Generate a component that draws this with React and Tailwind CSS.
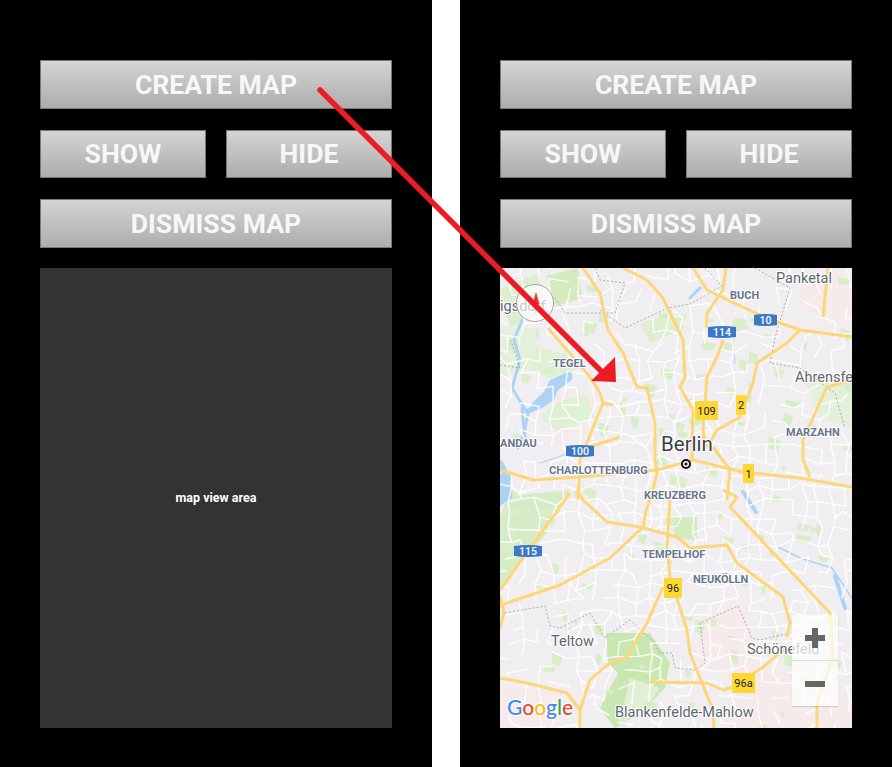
import React from 'react';

const font = { fontFamily: 'Roboto, sans-serif' };

// Yellow main roads, in map coordinates (352x460)
const mainRoads = [
  '83,0 100,25 108,62 123,85 137,119 147,120 155,155 155,192 157,205 153,222',
  '48,60 90,109 100,125 103,135 113,137',
  '103,135 80,192 78,232',
  '123,0 147,12 163,30 183,72 185,109 180,119 193,142 192,169 192,192',
  '193,0 207,22 253,44 280,55 300,62 352,69',
  '226,0 223,22 207,45 206,60',
  '223,72 217,89 207,109 203,159 205,180',
  '300,62 287,75 257,95 253,115 240,149 217,162 207,179',
  '0,202 33,212 80,209 157,202 193,192 243,204 300,210 352,219',
  '80,182 120,169',
  '352,112 327,119 303,172 303,192 310,209',
  '213,179 230,202 227,232',
  '328,0 323,49',
  '77,222 83,232 107,254 140,259 177,269 190,280 227,277 237,295 283,329 290,355 287,369',
  '170,232 167,279 170,309 187,362 190,385 213,442 214,460',
  '143,259 110,290 60,317 7,335 0,339',
  '0,322 70,225',
  '163,319 147,355 127,389 107,397 90,412 80,442 80,460',
  '0,410 27,415 67,425 80,442',
  '150,414 207,415 223,422 233,419 263,399 287,379',
  '223,222 237,229 230,239 330,345 333,389 317,435 317,460',
  '143,259 146,243 153,222',
  '0,328 4,345 0,360',
];

// Seeded random so the street mesh comes out the same every time
const makeRandom = (seed) => () => {
  seed = (seed * 1664525 + 1013904223) % 4294967296;
  return seed / 4294967296;
};

const buildStreets = () => {
  const rand = makeRandom(7);
  const step = 14;
  const cols = 27;
  const rows = 35;
  const nodes = [];
  for (let r = 0; r < rows; r++) {
    const row = [];
    for (let c = 0; c < cols; c++) {
      row.push([c * step + (rand() - 0.5) * 10 - 4, r * step + (rand() - 0.5) * 10 - 4]);
    }
    nodes.push(row);
  }
  const out = [];
  for (let r = 0; r < rows; r++) {
    for (let c = 0; c < cols; c++) {
      const [x, y] = nodes[r][c];
      const dist = Math.hypot(x - 175, y - 240);
      const chance = dist < 110 ? 0.85 : dist < 180 ? 0.62 : 0.42;
      if (c + 1 < cols && rand() < chance) out.push(`M${x.toFixed(1)},${y.toFixed(1)}L${nodes[r][c + 1][0].toFixed(1)},${nodes[r][c + 1][1].toFixed(1)}`);
      if (r + 1 < rows && rand() < chance) out.push(`M${x.toFixed(1)},${y.toFixed(1)}L${nodes[r + 1][c][0].toFixed(1)},${nodes[r + 1][c][1].toFixed(1)}`);
    }
  }
  return out.join('');
};

const buildSpecks = () => {
  const rand = makeRandom(21);
  const out = [];
  for (let i = 0; i < 130; i++) {
    const x = rand() * 345;
    const y = rand() * 455;
    const w = 4 + rand() * 11;
    const h = 3 + rand() * 8;
    out.push(`M${x.toFixed(1)},${y.toFixed(1)}l${w.toFixed(1)},${(h * 0.4).toFixed(1)}l${(-w * 0.3).toFixed(1)},${h.toFixed(1)}l${(-w * 0.7).toFixed(1)},${(-h * 0.3).toFixed(1)}z`);
  }
  return out.join('');
};

const streetMesh = buildStreets();
const parkSpecks = buildSpecks();

const greens = [
  ['M46,8 L78,0 L82,30 L55,38 Z', '#d3ebbf'], ['M0,20 L40,5 L45,40 L10,60 Z', '#deefd0'],
  ['M7,228 L70,222 L50,262 L10,305 L0,320 L0,250 Z', '#d6ecc6'], ['M173,249 L197,249 L197,272 L175,270 Z', '#d3ebbf'],
  ['M105,365 L150,365 L170,395 L165,420 L140,445 L115,460 L100,440 L118,405 L108,395 Z', '#c9e7b1'],
  ['M130,410 L160,420 L140,450 L122,445 Z', '#e0f0d5'], ['M30,75 L60,85 L80,100 L50,110 L25,100 Z', '#e0f0d4'],
  ['M55,135 L85,125 L95,150 L60,165 L40,150 Z', '#e0f0d4'], ['M140,55 L175,45 L185,60 L150,75 Z', '#deefd0'],
  ['M0,60 L40,60 L30,100 L0,110 Z', '#e4f1da'], ['M300,100 L352,120 L352,160 L320,150 Z', '#e4f1da'],
];

const pinks = [
  'M55,125 L100,125 L85,165 L50,175 Z', 'M195,350 L240,335 L262,395 L250,425 L200,395 Z',
  'M262,395 L352,430 L352,460 L220,460 L240,420 Z', 'M0,420 L60,425 L65,460 L0,460 Z', 'M300,10 L352,5 L352,60 L300,40 Z',
];

const waters = [
  ['M22,52 L14,72 L20,92 L12,120 L28,146 L24,165 L18,180', 3], ['M68,108 L50,118 L44,135 L28,143', 5],
  ['M22,140 L25,170', 3], ['M0,195 L8,210 L4,228', 6], ['M243,224 L256,244', 4],
  ['M276,278 L300,290 L332,300 L352,330', 1.5], ['M335,308 L345,340', 4], ['M0,235 L10,228', 5],
  ['M193,130 L180,140', 1], ['M235,95 L232,60', 1], ['M190,30 L200,20', 3], ['M85,180 L40,195', 1],
];

const districts = [
  ['BUCH', 230, 31], ['TEGEL', 53, 99], ['MARZAHN', 286, 168], ['CHARLOTTENBURG', 49, 206],
  ['KREUZBERG', 144, 231], ['TEMPELHOF', 142, 290], ['NEUKÖLLN', 193, 315], ['ANDAU', 0, 179],
];

const towns = [
  ['Panketal', 276, 15, 14.5], ['Ahrensfe', 295, 114, 14.5], ['Teltow', 51, 378, 14.5],
  ['Schönefeld', 247, 386, 14.5], ['Blankenfelde-Mahlow', 115, 449, 14.5], ['igsdorf', 0, 43, 14.5],
];

const blueShields = [['114', 208, 58, 28], ['10', 254, 46, 23], ['100', 66, 177, 28], ['115', 14, 277, 28]];

const yellowShields = [
  ['109', 195, 133, 23, 19], ['2', 236, 127, 10, 20], ['1', 243, 196, 11, 19],
  ['96', 164, 310, 18, 20], ['96a', 232, 405, 23, 20],
];

const CityMap = () => (
  <svg viewBox="0 0 352 460" className="block w-full h-full" style={font}>
    <rect width="352" height="460" fill="#f1eef1" />
    {pinks.map((d) => <path key={d} d={d} fill="#f6ebea" />)}
    {greens.map(([d, fill]) => <path key={d} d={d} fill={fill} />)}
    <path d={parkSpecks} fill="#d8eec8" />
    {waters.map(([d, w]) => (
      <path key={d} d={d} fill="none" stroke="#acd3f6" strokeWidth={w} strokeLinejoin="round" strokeLinecap="round" />
    ))}
    <path d="M72,102 L72,112 L58,122 L54,132 L42,140 L30,145 L32,135 L44,124 L50,112 Z" fill="#acd3f6" />
    <path d="M0,205 L10,212 L12,228 L0,236 Z" fill="#acd3f6" />
    <path d={streetMesh} fill="none" stroke="#fff" strokeWidth="1.3" strokeLinecap="round" />
    <g fill="none" stroke="#9a9a9a" strokeWidth="0.8" strokeDasharray="2 2">
      <polyline points="95,0 100,12 125,15 115,45 65,45 55,30" />
      <polyline points="205,0 222,18 190,36 168,40 125,60 100,42" />
      <polyline points="255,0 290,20 275,70 270,95 300,100 335,125 345,160" />
      <polyline points="0,97 20,100 10,70" />
      <polyline points="5,345 45,338 50,358 60,360 90,345 105,370 130,352 155,375 160,385 172,385 175,400 195,402 205,395 200,355 238,338 252,370 260,372 290,365" />
    </g>
    {mainRoads.map((p) => (
      <polyline key={p} points={p} fill="none" stroke="#fdd67a" strokeWidth="3" strokeLinejoin="round" />
    ))}
    <g stroke="#fff" strokeWidth="2" strokeLinejoin="round" style={{ paintOrder: 'stroke' }}>
      {towns.map(([label, x, y, size]) => (
        <text key={label} x={x} y={y} fontSize={size} fill="#5f666d">{label}</text>
      ))}
      {districts.map(([label, x, y]) => (
        <text key={label} x={x} y={y} fontSize="11" fontWeight="700" fill="#66758a">{label}</text>
      ))}
      <text x="161" y="183" fontSize="20.5" fill="#3c4043">Berlin</text>
    </g>
    <circle cx="186" cy="196" r="5" fill="#111" />
    <circle cx="186" cy="196" r="3" fill="#fff" />
    <circle cx="186" cy="196" r="1.6" fill="#111" />
    {blueShields.map(([label, x, y, w]) => (
      <g key={label}>
        <path d={`M${x},${y + 1} Q${x + w / 2},${y - 1} ${x + w},${y + 1} L${x + w},${y + 11} Q${x + w / 2},${y + 13} ${x},${y + 11} Z`} fill="#3b78c8" />
        <text x={x + w / 2} y={y + 10} fontSize="10.5" fontWeight="500" fill="#fff" textAnchor="middle">{label}</text>
      </g>
    ))}
    {yellowShields.map(([label, x, y, w, h]) => (
      <g key={label}>
        <rect x={x} y={y} width={w} height={h} fill="#fdd835" />
        <text x={x + w / 2} y={y + h / 2 + 4} fontSize="11" fill="#222" textAnchor="middle">{label}</text>
      </g>
    ))}
    <text x="7" y="447" fontSize="21" fontWeight="500" stroke="#fff" strokeWidth="2" style={{ fontFamily: 'Lato, sans-serif', paintOrder: 'stroke' }}>
      <tspan fill="#4285f4">G</tspan>
      <tspan fill="#ea4335">o</tspan>
      <tspan fill="#fbbc05">o</tspan>
      <tspan fill="#4285f4">g</tspan>
      <tspan fill="#34a853">l</tspan>
      <tspan fill="#ea4335">e</tspan>
    </text>
    {/* compass */}
    <circle cx="35" cy="35" r="18.5" fill="#fff" fillOpacity="0.65" stroke="#a8a8a8" strokeWidth="1" />
    <path d="M36,24 L39.5,36 L32.5,36 Z" fill="#e53935" />
    <path d="M36,46 L39.5,36 L32.5,36 Z" fill="#d8d8d8" />
  </svg>
);

const ZoomControls = () => (
  <div className="absolute left-[292px] top-[347px] w-[46px] h-[91px] flex flex-col bg-white/70 shadow-[0_1px_1px_rgba(0,0,0,0.15)]">
    <div className="flex-1 flex items-center justify-center border-b border-[#dcdcdc]">
      <svg width="20" height="20" viewBox="0 0 20 20"><path d="M0,7 H7 V0 H13 V7 H20 V13 H13 V20 H7 V13 H0 Z" fill="#666" /></svg>
    </div>
    <div className="flex-1 flex items-center justify-center">
      <div className="w-[20px] h-[6px] bg-[#666]" />
    </div>
  </div>
);

const MapButton = ({ label, className = '' }) => (
  <button
    className={`flex items-center justify-center border border-[#777] bg-gradient-to-b from-[#d4d4d4] to-[#adadad] text-[26.6px] font-bold text-[#f7f7f7] ${className}`}
    style={font}
  >
    {label}
  </button>
);

const Phone = ({ children }) => (
  <div className="w-[432px] h-[767px] bg-black px-[40px] pt-[60px] flex flex-col">
    <MapButton label="CREATE MAP" className="h-[49px]" />
    <div className="flex gap-[20px] mt-[21px]">
      <MapButton label="SHOW" className="flex-1 h-[48px]" />
      <MapButton label="HIDE" className="flex-1 h-[48px]" />
    </div>
    <div className="mt-[21px]">
      <MapButton label="DISMISS MAP" className="w-full h-[49px]" />
    </div>
    <div className="relative mt-[20px] h-[460px] bg-[#333]">{children}</div>
  </div>
);

const App = () => (
  <div className="relative w-[892px] h-[767px] bg-white flex justify-between overflow-hidden">
    <Phone>
      <div className="h-full flex items-center justify-center text-[12.5px] font-bold text-white" style={font}>
        map view area
      </div>
    </Phone>
    <Phone>
      <CityMap />
      <ZoomControls />
    </Phone>
    {/* red annotation arrow */}
    <svg className="absolute inset-0 pointer-events-none" width="892" height="767">
      <line x1="320" y1="90" x2="601" y2="371" stroke="#ed1c24" strokeWidth="5.5" strokeLinecap="round" />
      <path d="M615,357 L616,382 L591,381 Z" fill="#ed1c24" />
    </svg>
  </div>
);

export default App;
